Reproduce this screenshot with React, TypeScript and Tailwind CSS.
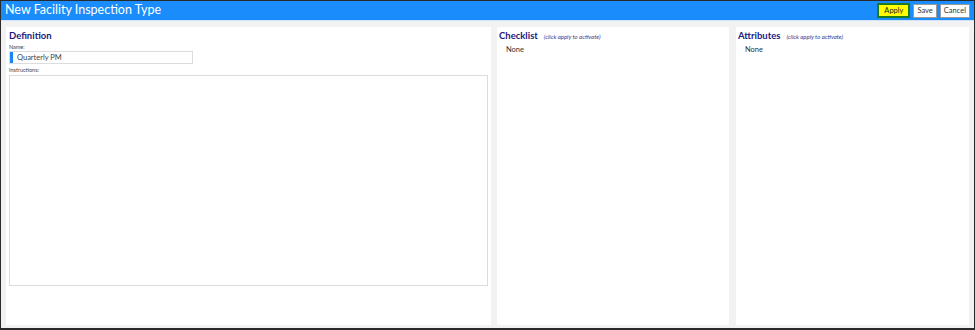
const font = { fontFamily: 'Lato, "Open Sans", sans-serif' };

function PanelHeading({ title, hint }: { title: string; hint?: string }) {
    return (
        <div className="flex items-baseline gap-[6px] leading-none">
            <h2 className="text-[9.5px] font-bold text-[#1d1a7e]">{title}</h2>
            {hint && <span className="text-[6px] italic text-[#3b3890]">{hint}</span>}
        </div>
    );
}

function ListPanel({ title, className }: { title: string; className: string }) {
    return (
        <section className={`flex flex-col bg-white px-[2px] pt-[4px] ${className}`}>
            <PanelHeading title={title} hint="(click apply to activate)" />
            <p className="mt-[5px] pl-[7px] text-[7.5px] leading-none text-[#333]">None</p>
        </section>
    );
}

export default function App() {
    return (
        <div
            style={font}
            className="flex h-[330px] w-[975px] flex-col border border-b-2 border-[#2a2a2a] bg-[#f2f2f2]"
        >
            <header className="flex h-[19px] shrink-0 items-center justify-between bg-[#1b8cfb] pl-[4px] pr-[4px]">
                <h1 className="text-[12.5px] leading-none text-white">New Facility Inspection Type</h1>
                <div className="flex items-center gap-[3px] text-[7.5px] leading-none">
                    <button
                        type="button"
                        className="h-[15px] border-2 border-[#1e7a1e] bg-[#ffff00] px-[5px] text-[#222]"
                    >
                        Apply
                    </button>
                    <button
                        type="button"
                        className="h-[14px] border border-[#9a9a9a] bg-white px-[3px] text-[#333]"
                    >
                        Save
                    </button>
                    <button
                        type="button"
                        className="h-[14px] border border-[#9a9a9a] bg-white px-[3px] text-[#333]"
                    >
                        Cancel
                    </button>
                </div>
            </header>
            <div className="h-px shrink-0 bg-[#cfe4fb]" />

            <main className="flex min-h-0 flex-1 gap-[6px] pb-[3px] pl-[5px] pr-[5px] pt-[6px]">
                <section className="flex w-[485px] flex-col bg-white px-[3px] pt-[4px]">
                    <PanelHeading title="Definition" />
                    <label className="mt-[4px] text-[5.5px] leading-none text-[#444]">Name:</label>
                    <div className="mt-[1px] flex h-[13px] w-[184px] items-center border border-[#dcdcdc]">
                        <span className="h-full w-[3px] bg-[#1a86f5]" />
                        <span className="pl-[4px] text-[7.5px] leading-none text-[#444]">
                            Quarterly PM
                        </span>
                    </div>
                    <label className="mt-[4px] text-[5.5px] leading-none text-[#444]">
                        Instructions:
                    </label>
                    <div className="mt-[1px] h-[211px] w-[479px] border border-[#dcdcdc]" />
                </section>

                <ListPanel title="Checklist" className="w-[232px]" />
                <ListPanel title="Attributes" className="ml-[1px] w-[233px]" />
            </main>
        </div>
    );
}
